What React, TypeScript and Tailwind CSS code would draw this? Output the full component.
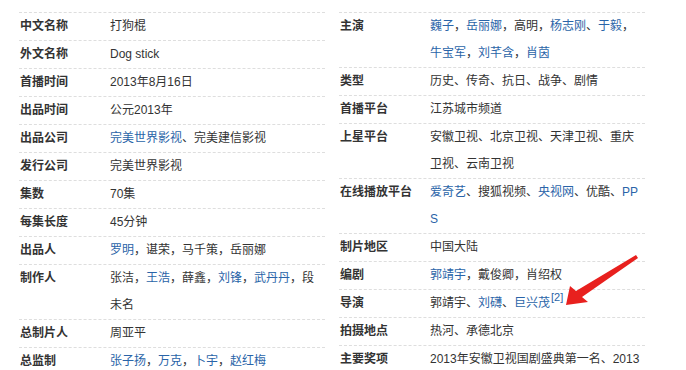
type Seg = { t: string; link?: boolean };
type Row = { label: string; value: Seg[]; sup?: string };

const L = (t: string): Seg => ({ t, link: true });
const T = (t: string): Seg => ({ t });

const leftRows: Row[] = [
  { label: '中文名称', value: [T('打狗棍')] },
  { label: '外文名称', value: [T('Dog stick')] },
  { label: '首播时间', value: [T('2013年8月16日')] },
  { label: '出品时间', value: [T('公元2013年')] },
  { label: '出品公司', value: [L('完美世界影视'), T('、完美建信影视')] },
  { label: '发行公司', value: [T('完美世界影视')] },
  { label: '集数', value: [T('70集')] },
  { label: '每集长度', value: [T('45分钟')] },
  { label: '出品人', value: [L('罗明'), T('，谌荣，马千策，岳丽娜')] },
  {
    label: '制作人',
    value: [T('张洁，'), L('王浩'), T('，薛鑫，'), L('刘锋'), T('，'), L('武丹丹'), T('，段未名')]
  },
  { label: '总制片人', value: [T('周亚平')] },
  { label: '总监制', value: [L('张子扬'), T('，'), L('万克'), T('，'), L('卜宇'), T('，'), L('赵红梅')] }
];

const rightRows: Row[] = [
  {
    label: '主演',
    value: [
      L('巍子'), T('，'), L('岳丽娜'), T('，高明，'), L('杨志刚'), T('、'), L('于毅'), T('，'),
      L('牛宝军'), T('，'), L('刘芊含'), T('，'), L('肖茵')
    ]
  },
  { label: '类型', value: [T('历史、传奇、抗日、战争、剧情')] },
  { label: '首播平台', value: [T('江苏城市频道')] },
  { label: '上星平台', value: [T('安徽卫视、北京卫视、天津卫视、重庆卫视、云南卫视')] },
  {
    label: '在线播放平台',
    value: [L('爱奇艺'), T('、搜狐视频、'), L('央视网'), T('、优酷、'), L('PPS')]
  },
  { label: '制片地区', value: [T('中国大陆')] },
  { label: '编剧', value: [L('郭靖宇'), T('，戴俊卿，肖绍权')] },
  { label: '导演', value: [T('郭靖宇、'), L('刘礴'), T('、'), L('巨兴茂')], sup: '[2]' },
  { label: '拍摄地点', value: [T('热河、承德北京')] },
  { label: '主要奖项', value: [T('2013年安徽卫视国剧盛典第一名、2013年度最具影响力电视剧')] }
];

function InfoColumn({ rows }: { rows: Row[] }) {
  return (
    <dl className="w-[306px] border-t border-dashed border-[#dedede]">
      {rows.map((row) => (
        <div key={row.label} className="flex border-b border-dashed border-[#dedede] leading-[27px]">
          <dt className="w-[91px] shrink-0 pl-px font-bold text-[#333]">{row.label}</dt>
          <dd className="w-[215px] break-all text-[#333]">
            {row.value.map((seg, i) =>
              seg.link ? (
                <span key={i} className="text-[#2a64a8]">
                  {seg.t}
                </span>
              ) : (
                <span key={i}>{seg.t}</span>
              )
            )}
            {row.sup && (
              <sup className="relative -top-[6px] ml-px text-[11px] text-[#2a64a8]">{row.sup}</sup>
            )}
          </dd>
        </div>
      ))}
    </dl>
  );
}

export default function App() {
  return (
    <div
      className="relative h-[370px] w-[686px] overflow-hidden bg-white text-[12px]"
      style={{ fontFamily: '"Liberation Sans", "Noto Sans CJK SC", sans-serif' }}
    >
      <div className="flex gap-[14px] pl-[19px] pt-[12px]">
        <InfoColumn rows={leftRows} />
        <InfoColumn rows={rightRows} />
      </div>

      <svg className="pointer-events-none absolute inset-0" width="686" height="370" viewBox="0 0 686 370">
        <polygon
          points="566,305 570,286 576,291 636,255 638,258 582,297 588,302"
          fill="#e8201e"
        />
      </svg>
    </div>
  );
}
